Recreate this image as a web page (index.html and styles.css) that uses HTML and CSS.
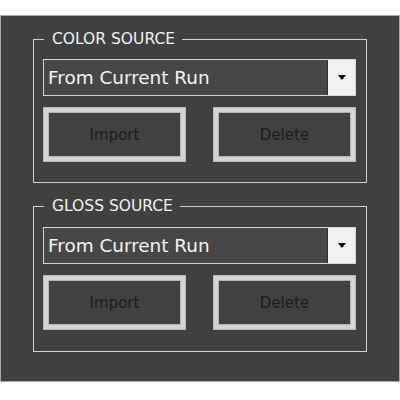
FILE: index.html
```html
<!DOCTYPE html>
<html>
<head>
<meta charset="utf-8">
<link rel="stylesheet" href="styles.css">
</head>
<body>
<div class="panel">
  <fieldset class="group">
    <legend class="group-title">COLOR SOURCE</legend>
    <div class="combo">
      <span class="combo-text">From Current Run</span>
      <span class="combo-btn"><svg width="8" height="5" viewBox="0 0 8 5"><path d="M0 0H8L4 5Z" fill="#111"/></svg></span>
    </div>
    <div class="actions">
      <button class="btn">Import</button>
      <button class="btn">Delete</button>
    </div>
  </fieldset>
  <fieldset class="group group-gloss">
    <legend class="group-title">GLOSS SOURCE</legend>
    <div class="combo">
      <span class="combo-text">From Current Run</span>
      <span class="combo-btn"><svg width="8" height="5" viewBox="0 0 8 5"><path d="M0 0H8L4 5Z" fill="#111"/></svg></span>
    </div>
    <div class="actions">
      <button class="btn">Import</button>
      <button class="btn">Delete</button>
    </div>
  </fieldset>
</div>
</body>
</html>
```
FILE: styles.css
```css
html, body {
  margin: 0;
  padding: 0;
  background: #ffffff;
}
body {
  font-family: "DejaVu Sans", Verdana, sans-serif;
}
.panel {
  margin-top: 15px;
  width: 400px;
  height: 367px;
  box-sizing: border-box;
  background: #404040;
  border: 1px solid #a9a9a9;
  padding: 14px 32px 0 32px;
  display: flex;
  flex-direction: column;
  gap: 14px;
}
.group {
  margin: 0;
  border: 1px solid #d2d2d2;
  padding: 11px 10px 21px 9px;
  min-width: 0;
}
.group-gloss {
  padding-top: 12px;
  padding-bottom: 22px;
}
.group-title {
  font-size: 15.5px;
  line-height: 18px;
  color: #f2f2f2;
  padding: 0 7px 0 8px;
  margin-left: 1px;
  height: 18px;
}
.combo {
  height: 37px;
  box-sizing: border-box;
  border: 1px solid #d6d6d6;
  background: #474747;
  display: flex;
  align-items: stretch;
}
.combo-text {
  flex: 1;
  color: #f4f4f4;
  font-size: 18.4px;
  line-height: 35px;
  padding-left: 4px;
  border-right: 1px solid #2e2e2e;
  white-space: nowrap;
  overflow: hidden;
}
.combo-btn {
  width: 27px;
  background: #f0f0f0;
  display: flex;
  align-items: center;
  justify-content: center;
}
.actions {
  display: flex;
  gap: 29px;
  padding: 0 1px;
  margin-top: 12px;
}
.btn {
  width: 141px;
  height: 53px;
  box-sizing: border-box;
  margin: 0;
  background: #414141;
  border: 4px solid #d4d4d4;
  box-shadow: inset 0 0 0 1px #b5b5b5, 0 0 0 1px #b8b8b8;
  color: #1c1c1c;
  font-family: "DejaVu Sans", Verdana, sans-serif;
  font-size: 15px;
  padding: 0;
}
```
